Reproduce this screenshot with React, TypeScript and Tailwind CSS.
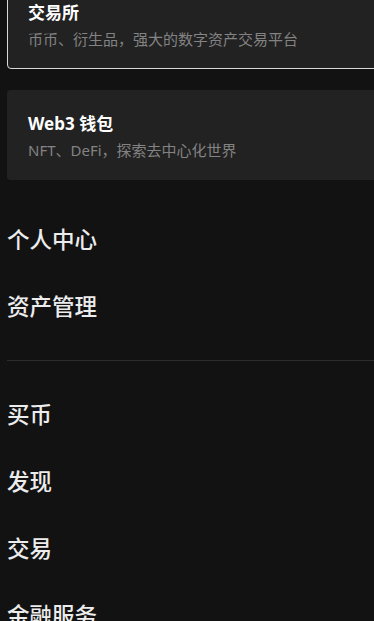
const cjk = { fontFamily: '"Noto Sans", "Noto Sans CJK SC", sans-serif' };

const products = [
  { title: '交易所', desc: '币币、衍生品，强大的数字资产交易平台', active: true },
  { title: 'Web3 钱包', desc: 'NFT、DeFi，探索去中心化世界', active: false },
];

const accountLinks = ['个人中心', '资产管理'];
const mainLinks = ['买币', '发现', '交易', '金融服务'];

export default function App() {
  return (
    <div className="h-[621px] w-[374px] overflow-hidden bg-[#121212]" style={cjk}>
      {/* scrolled menu, top card partly off screen */}
      <div className="-mt-[21px] pl-[7px]">
        <div className="flex flex-col gap-[21px] -mr-3">
          {products.map((p) => (
            <div
              key={p.title}
              className={`h-[90px] rounded-[4px] bg-[#222222] px-[20px] pt-[22px] ${
                p.active ? 'border border-[#d9d9d9]' : 'border border-transparent'
              }`}
            >
              <div className="text-[17px] font-bold leading-[22px] text-white">{p.title}</div>
              <div className="mt-[5px] text-[15px] leading-[20px] text-[#838383]">{p.desc}</div>
            </div>
          ))}
        </div>

        <nav className="mt-[26px]">
          {accountLinks.map((l) => (
            <div key={l} className="flex h-[67px] items-center text-[22.5px] font-medium text-[#ececec]">
              {l}
            </div>
          ))}
          <div className="my-[20px] h-px bg-[#2c2c2c]" />
          {mainLinks.map((l) => (
            <div key={l} className="flex h-[67px] items-center text-[22.5px] font-medium text-[#ececec]">
              {l}
            </div>
          ))}
        </nav>
      </div>
    </div>
  );
}
